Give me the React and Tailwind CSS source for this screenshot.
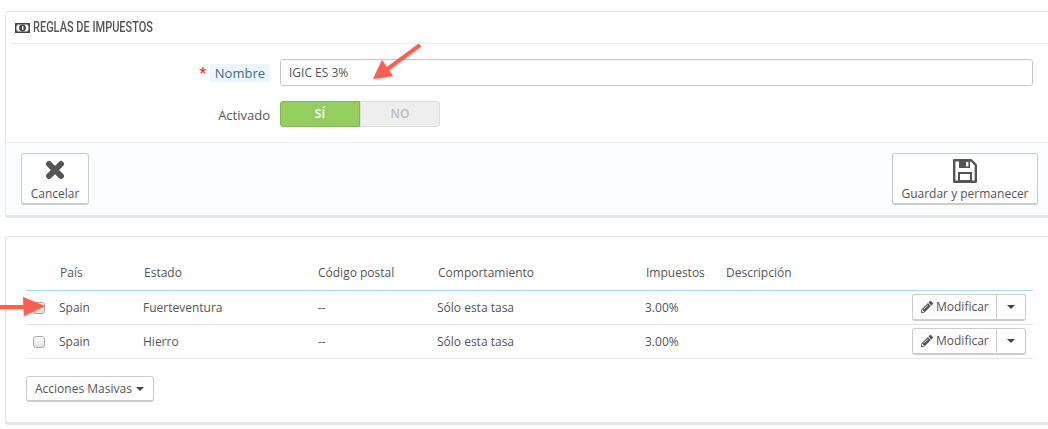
import { FaPencilAlt } from 'react-icons/fa';

const rows = ['Fuerteventura', 'Hierro'];

function Caret() {
  return <span className="inline-block w-0 h-0 border-x-[4px] border-x-transparent border-t-[4px] border-t-[#444]" />;
}

function MoneyIcon() {
  return (
    <svg width="15" height="10" viewBox="0 0 15 10">
      <rect width="15" height="10" rx="0.5" fill="#444" />
      <rect x="1.5" y="1.5" width="12" height="7" fill="#fff" />
      <circle cx="7.5" cy="5" r="3.4" fill="#444" />
      <rect x="7" y="3" width="1.4" height="4" fill="#fff" />
      <rect x="1" y="1" width="1.5" height="1.5" fill="#444" />
      <rect x="12.5" y="1" width="1.5" height="1.5" fill="#444" />
      <rect x="1" y="7.5" width="1.5" height="1.5" fill="#444" />
      <rect x="12.5" y="7.5" width="1.5" height="1.5" fill="#444" />
    </svg>
  );
}

function CloseIcon() {
  return (
    <svg width="20" height="20" viewBox="0 0 20 20">
      <path d="M4 4 L16 16 M16 4 L4 16" stroke="#555" strokeWidth="6" strokeLinecap="round" />
    </svg>
  );
}

function SaveIcon() {
  return (
    <svg className="mt-[2px]" width="24" height="24" viewBox="0 0 24 24">
      <path d="M1.2 1.2 H18 L22.8 6 V22.8 H1.2 Z" fill="#fff" stroke="#555" strokeWidth="2.4" strokeLinejoin="round" />
      <path d="M6 1.5 H17 V9 H6 Z" fill="#555" />
      <rect x="13" y="3" width="2.4" height="4.4" fill="#fff" />
      <rect x="6" y="14" width="12" height="8" fill="#fff" stroke="#555" strokeWidth="2" />
    </svg>
  );
}

function ActionButton({ icon, label, className }) {
  return (
    <button className={`flex flex-col items-center h-[52px] bg-white border border-[#ccc] border-b-2 rounded-[3px] text-[12px] leading-[17px] text-[#555] ${className}`}>
      <span className="h-[30px] flex items-center mt-[1px]">{icon}</span>
      <span>{label}</span>
    </button>
  );
}

function TableRow({ name }) {
  return (
    <div className="grid grid-cols-[33px_84px_175px_119px_208px_1fr] items-center h-[34px] border-b border-[#e6e6e6] text-[12px] text-[#555]">
      <span className="pl-[7px] flex items-center">
        <span className="w-[12px] h-[12px] rounded-[3px] border border-[#aaa] bg-gradient-to-b from-white to-[#e2e2e2]" />
      </span>
      <span>Spain</span>
      <span>{name}</span>
      <span>--</span>
      <span>Sólo esta tasa</span>
      <div className="flex items-center justify-between">
        <span>3.00%</span>
        <div className="flex h-[27px] border border-[#ccc] border-b-2 rounded-[3px] mr-[7px]">
          <span className="flex items-center gap-[3px] w-[84px] pl-[8px] border-r border-[#ccc]">
            <FaPencilAlt className="text-[12px] text-[#555]" />
            Modificar
          </span>
          <span className="flex items-center justify-center w-[28px]"><Caret /></span>
        </div>
      </div>
    </div>
  );
}

export default function App() {
  return (
    <div className="relative w-[1048px] h-[429px] overflow-hidden bg-white pt-[11px] pl-[5px] font-['Open_Sans',sans-serif]">
      <section className="w-[1060px] h-[207px] border border-[#e6e6e6] border-b-[3px] rounded-[4px] bg-white">
        <h2 className="flex items-center gap-[3px] h-[32px] ml-[5px] mr-[10px] border-b border-[#eee] pl-[4px] text-[14px] font-medium text-[#555] font-['Roboto',sans-serif]">
          <MoneyIcon />
          <span className="inline-block origin-left scale-x-[0.785]">REGLAS DE IMPUESTOS</span>
        </h2>

        <div className="h-[98px] pt-[15px]">
          <div className="flex items-center h-[27px]">
            <div className="w-[264px] flex justify-end items-center gap-[3px] text-[13px]">
              <span className="text-[#f00] text-[14px]">*</span>
              <span className="bg-[#eef6fb] text-[#3a6f96] px-[5px] rounded-[2px] leading-[18px]">Nombre</span>
            </div>
            <div className="ml-[10px] w-[753px] h-[27px] flex items-center px-[8px] border border-[#c7c7c7] rounded-[3px] text-[12px] text-[#555]">
              IGIC ES 3%
            </div>
          </div>
          <div className="flex items-center h-[26px] mt-[15px]">
            <div className="w-[264px] pt-[3px] text-right text-[13px] text-[#555]">Activado</div>
            <div className="ml-[10px] flex w-[160px] h-[26px] text-[12px] font-semibold">
              <span className="w-[80px] flex items-center justify-center bg-[#93ce5f] border border-[#7fbb4a] rounded-l-[3px] text-white">SÍ</span>
              <span className="w-[80px] flex items-center justify-center bg-[#eee] border border-[#ddd] rounded-r-[3px] text-[#bbb]">NO</span>
            </div>
          </div>
        </div>

        <footer className="flex justify-between items-start h-[73px] pt-[10px] pl-[15px] pr-[26px] bg-[#fcfdfe] border-t border-[#eee]">
          <ActionButton icon={<CloseIcon />} label="Cancelar" className="w-[68px]" />
          <ActionButton icon={<SaveIcon />} label="Guardar y permanecer" className="w-[146px]" />
        </footer>
      </section>

      <section className="mt-[18px] w-[1060px] h-[189px] border border-[#e6e6e6] border-b-[3px] rounded-[4px] pl-[20px] pt-[27px]">
        <div className="w-[1007px]">
          <div className="grid grid-cols-[33px_84px_174px_120px_208px_80px_1fr] h-[27px] border-b border-[#a9d8ea] text-[12px] text-[#555] pl-px">
            <span />
            <span>País</span>
            <span>Estado</span>
            <span>Código postal</span>
            <span>Comportamiento</span>
            <span>Impuestos</span>
            <span>Descripción</span>
          </div>
          {rows.map((name) => <TableRow key={name} name={name} />)}
        </div>
        <button className="mt-[17px] flex items-center gap-[4px] w-[128px] h-[26px] pl-[8px] pt-[1px] bg-white border border-[#ccc] border-b-2 rounded-[3px] text-[12px] text-[#555]">
          Acciones Masivas <Caret />
        </button>
      </section>

      <svg className="absolute left-0 top-0 pointer-events-none drop-shadow-[0_1px_1px_rgba(0,0,0,0.25)]" width="1048" height="429">
        <path d="M420 45 L386 70" stroke="#f9604f" strokeWidth="4" fill="none" />
        <path d="M373 79 L382 60 L393 76 Z" fill="#f9604f" />
        <path d="M0 307 L30 307" stroke="#f9604f" strokeWidth="4" fill="none" />
        <path d="M45 306 L23 297 L24 316 Z" fill="#f9604f" />
      </svg>
    </div>
  );
}
